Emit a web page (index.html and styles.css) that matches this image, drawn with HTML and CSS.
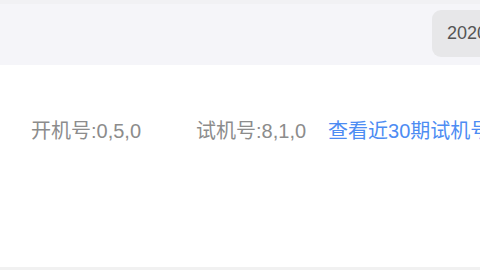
FILE: index.html
```html
<!DOCTYPE html>
<html lang="zh">
<head>
<meta charset="utf-8">
<link rel="stylesheet" href="styles.css">
</head>
<body>
<div class="topband"></div>
<div class="header">
  <div class="date-btn">2020-06-12</div>
</div>
<div class="main">
  <div class="row">
    <span class="item open">开机号:0,5,0</span>
    <span class="item trial">试机号:8,1,0</span>
    <span class="link">查看近30期试机号</span>
  </div>
</div>
<div class="bottomband"></div>
</body>
</html>
```
FILE: styles.css
```css
html, body {
  margin: 0;
  padding: 0;
  width: 480px;
  height: 270px;
  overflow: hidden;
  background: #ffffff;
  font-family: "Liberation Sans", "Noto Sans CJK SC", sans-serif;
}
.topband {
  height: 4px;
  background: #f1f1f4;
}
.header {
  height: 61px;
  background: #f5f5f9;
  display: flex;
  align-items: flex-start;
  padding-left: 432px;
  overflow: hidden;
  box-sizing: border-box;
  padding-top: 6px;
}
.date-btn {
  flex-shrink: 0;
  height: 47px;
  border-radius: 9px;
  background: #e7e7e9;
  color: #555555;
  font-size: 18px;
  display: flex;
  align-items: center;
  padding: 0 15px;
  white-space: nowrap;
}
.main {
  height: 202px;
  box-sizing: border-box;
  padding-top: 51px;
}
.row {
  display: flex;
  align-items: center;
  height: 30px;
  line-height: 30px;
  padding-left: 31px;
  white-space: nowrap;
  font-size: 20px;
}
.item {
  color: #8c8c8c;
}
.open {
  margin-right: 55px;
}
.trial {
  margin-right: 22px;
}
.link {
  color: #4d8cf3;
}
.bottomband {
  height: 3px;
  background: #f1f1f1;
}
```
